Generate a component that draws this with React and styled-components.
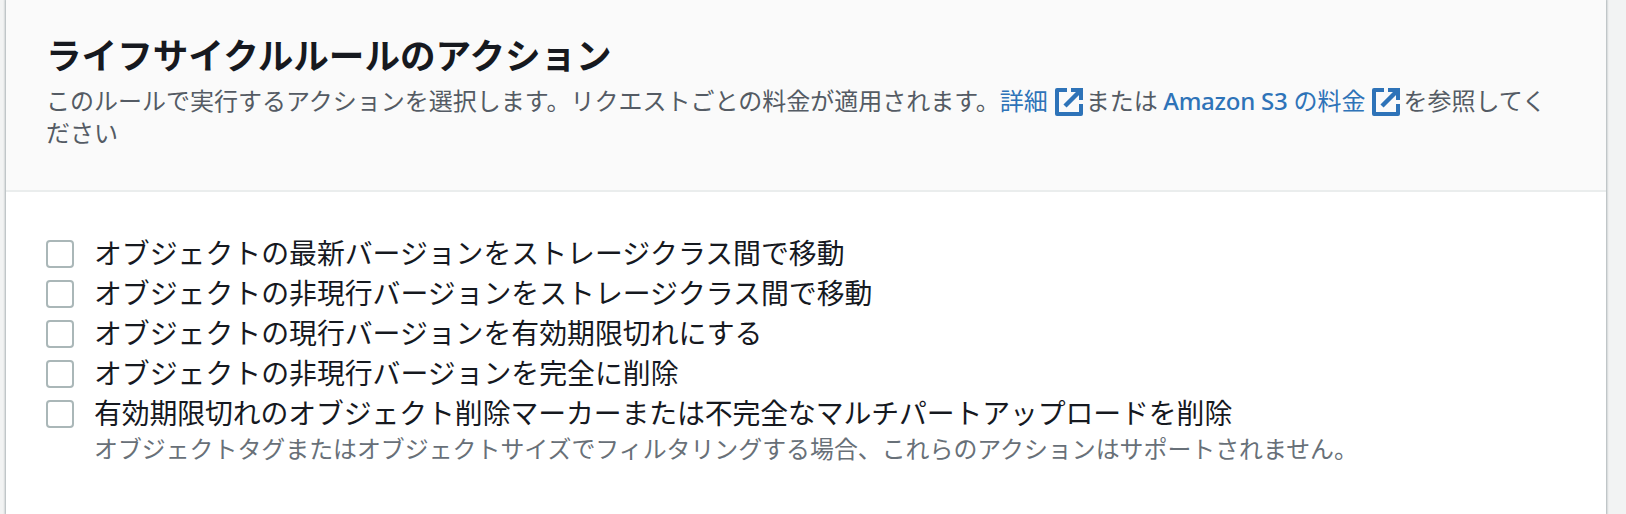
import React from "react";
import styled, { createGlobalStyle } from "styled-components";

const Global = createGlobalStyle`
  * { box-sizing: border-box; }
  body {
    margin: 0;
    background: #f2f3f3;
    font-family: "Noto Sans CJK JP", sans-serif;
    color: #16191f;
    overflow: hidden;
  }
`;

const Page = styled.div`
  height: 514px;
  padding: 0 20px 0 6px;
  display: flex;
`;

const Panel = styled.section`
  flex: 1;
  background: #fff;
  box-shadow: 0 0 2px 1px rgba(0, 28, 36, 0.3);
`;

const Header = styled.header`
  height: 192px;
  padding: 31px 40px 0;
  background: #fafafa;
  border-bottom: 2px solid #eaeded;
`;

const Title = styled.h2`
  margin: 0;
  font-size: 35.6px;
  line-height: 46px;
  font-weight: 700;
`;

const Description = styled.p`
  margin: 7px 0 0;
  font-size: 24px;
  line-height: 31.5px;
  color: #545b64;
  white-space: nowrap;
`;

const Link = styled.a`
  color: #2e73b8;
  text-decoration: none;
`;

const Latin = styled.span`
  font-family: "Noto Sans", sans-serif;
  font-weight: 500;
  font-size: 24px;
  line-height: 1;
  letter-spacing: -0.25px;
`;

const Icon = styled.svg`
  width: 28px;
  height: 28px;
  margin: -6px 3px -6px 7px;
  vertical-align: 0;
  fill: none;
  stroke: currentColor;
  stroke-width: 4;
`;

const Options = styled.div`
  padding: 42px 40px 0;
`;

const Option = styled.label`
  display: flex;
  align-items: center;
  height: 40px;
  gap: 20px;
  font-size: 27.87px;
  line-height: 36px;
  letter-spacing: ${({ $tight }) => ($tight ? "-0.1px" : "0")};
  white-space: nowrap;
`;

const LabelText = styled.span`
  padding-bottom: 4px;
`;

const Checkbox = styled.input.attrs({ type: "checkbox" })`
  appearance: none;
  flex: none;
  width: 28px;
  height: 28px;
  margin: 0;
  background: #fff;
  border: 2px solid #aab7b8;
  border-radius: 4px;
`;

const Hint = styled.p`
  margin: 0;
  padding-left: 48px;
  font-size: 23.92px;
  line-height: 27px;
  color: #687078;
  white-space: nowrap;
`;

const External = () => (
  <Icon viewBox="0 0 28 28" aria-hidden="true">
    <path d="M12 2H2v24h24V16" strokeLinejoin="round" />
    <path d="M16 2h10v10" />
    <path d="M25 3L10 18" strokeWidth="4.500" />
  </Icon>
);

const options = [
  { label: "オブジェクトの最新バージョンをストレージクラス間で移動" },
  { label: "オブジェクトの非現行バージョンをストレージクラス間で移動" },
  { label: "オブジェクトの現行バージョンを有効期限切れにする" },
  { label: "オブジェクトの非現行バージョンを完全に削除" },
  {
    label: "有効期限切れのオブジェクト削除マーカーまたは不完全なマルチパートアップロードを削除",
    tight: true,
  },
];

export default function App() {
  return (
    <Page lang="ja">
      <Global />
      <Panel>
        <Header>
          <Title>ライフサイクルルールのアクション</Title>
          <Description>
            このルールで実行するアクションを選択します。リクエストごとの料金が適用されます。
            <Link>詳細<External /></Link>
            または <Link><Latin>Amazon S3 </Latin>の料金<External /></Link>
            を参照してく<br />ださい
          </Description>
        </Header>
        <Options>
          {options.map(({ label, tight }) => (
            <Option key={label} $tight={tight}>
              <Checkbox />
              <LabelText>{label}</LabelText>
            </Option>
          ))}
          <Hint>オブジェクトタグまたはオブジェクトサイズでフィルタリングする場合、これらのアクションはサポートされません。</Hint>
        </Options>
      </Panel>
    </Page>
  );
}
